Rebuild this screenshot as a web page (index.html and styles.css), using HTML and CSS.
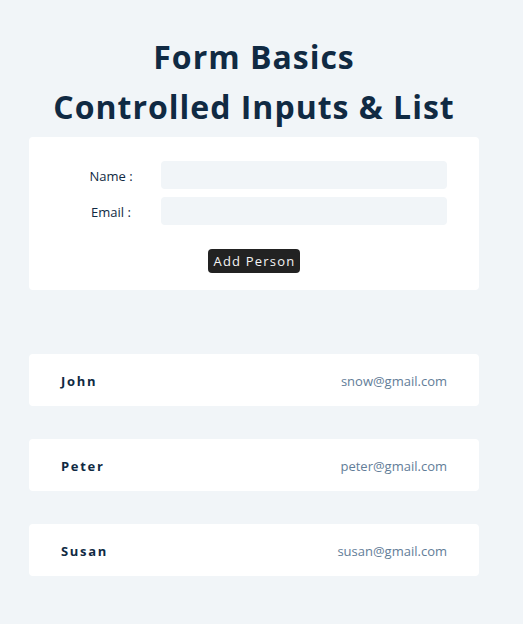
FILE: index.html
```html
<!DOCTYPE html>
<html>
<head>
<meta charset="utf-8">
<link rel="stylesheet" href="styles.css">
</head>
<body>
<div class="viewport">
<main class="page">
  <h1 class="title">Form Basics</h1>
  <h1 class="title">Controlled Inputs &amp; List</h1>
  <form class="card form">
    <div class="form-control">
      <label class="label" for="name">Name :</label>
      <input class="input" type="text" id="name">
    </div>
    <div class="form-control">
      <label class="label" for="email">Email :</label>
      <input class="input" type="text" id="email">
    </div>
    <div class="actions">
      <button class="btn" type="button">Add Person</button>
    </div>
  </form>
  <div class="list">
    <div class="item"><span class="name">John</span><span class="email">snow@gmail.com</span></div>
    <div class="item"><span class="name">Peter</span><span class="email">peter@gmail.com</span></div>
    <div class="item"><span class="name">Susan</span><span class="email">susan@gmail.com</span></div>
  </div>
</main>
</div>
</body>
</html>
```
FILE: styles.css
```css
* { box-sizing: border-box; }
html, body { margin: 0; padding: 0; }
body {
  background: #f1f5f8;
  font-family: "Open Sans", "Noto Sans", sans-serif;
  color: #102a43;
}
.viewport {
  width: 508px;
}
.page {
  width: 450px;
  margin: 0 auto;
  padding-top: 32px;
  padding-bottom: 48px;
}
.title {
  margin: 0;
  text-align: center;
  font-size: 32px;
  line-height: 50px;
  font-weight: 700;
  letter-spacing: 1px;
  color: #102a43;
}
.card {
  background: #fff;
  border-radius: 4px;
}
.form {
  margin-top: 5px;
  padding: 24px 32px 17px;
}
.form-control {
  display: grid;
  grid-template-columns: 100px 1fr;
  align-items: center;
  margin-bottom: 8px;
}
.label {
  text-align: center;
  font-size: 13px;
  line-height: 18px;
  padding-top: 2px;
  color: #102a43;
}
.input {
  height: 28px;
  border: none;
  border-radius: 4px;
  background: #f1f5f8;
}
.actions {
  display: flex;
  justify-content: center;
  margin-top: 24px;
}
.btn {
  background: #222;
  color: #f4f4f4;
  border: none;
  border-radius: 4px;
  font-family: inherit;
  font-size: 13px;
  letter-spacing: 1.2px;
  padding: 3px 5px 3px 6px;
  height: 24px;
}
.list {
  margin-top: 64px;
  display: flex;
  flex-direction: column;
  gap: 33px;
}
.item {
  height: 52px;
  padding: 1px 32px 0;
  background: #fff;
  border-radius: 4px;
  display: flex;
  justify-content: space-between;
  align-items: center;
}
.name {
  font-weight: 700;
  font-size: 13px;
  letter-spacing: 1.7px;
  color: #102a43;
}
.email {
  font-size: 13px;
  color: #627d98;
}
```
